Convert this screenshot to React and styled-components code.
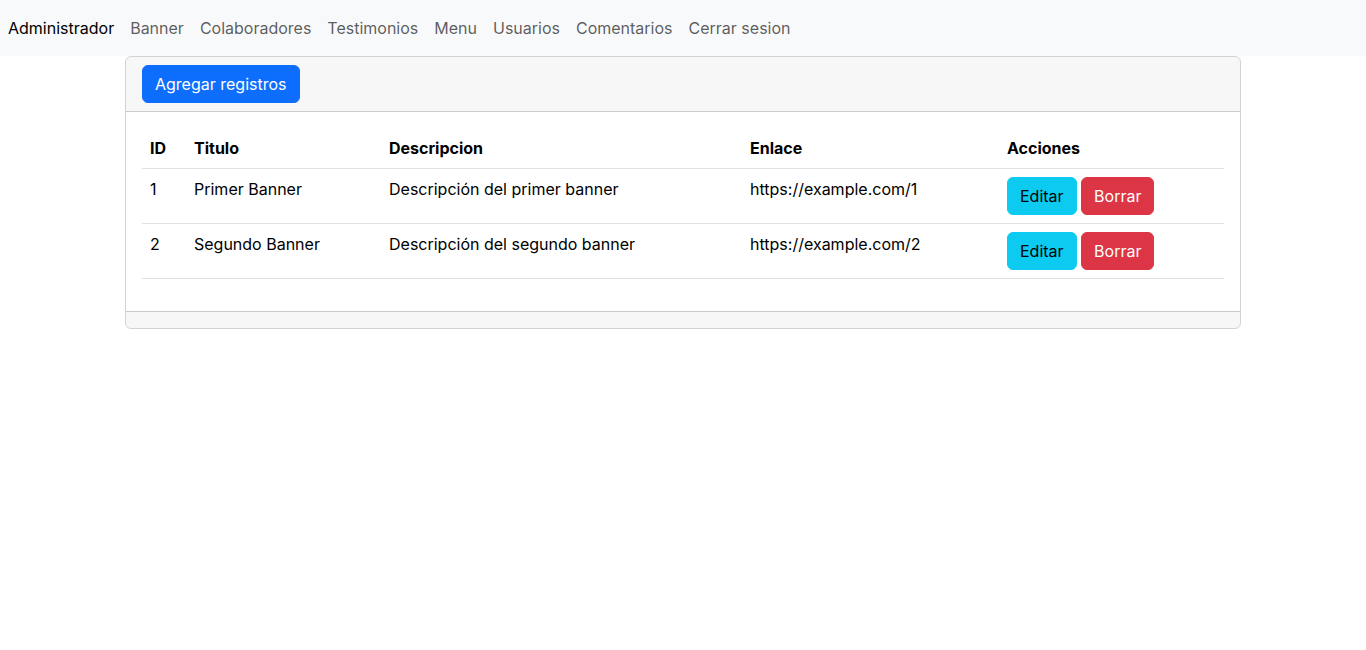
import React from 'react'
import styled, { createGlobalStyle } from 'styled-components'

const banners = [
  { id: 1, titulo: 'Primer Banner', descripcion: 'Descripción del primer banner', enlace: 'https://example.com/1' },
  { id: 2, titulo: 'Segundo Banner', descripcion: 'Descripción del segundo banner', enlace: 'https://example.com/2' }
]

const links = ['Banner', 'Colaboradores', 'Testimonios', 'Menu', 'Usuarios', 'Comentarios', 'Cerrar sesion']

export default function App() {
  return (
    <>
      <GlobalStyle />
      <Navbar>
        <NavList>
          <NavLink href="#" active>Administrador</NavLink>
          {links.map(l => (
            <NavLink key={l} href="#">{l}</NavLink>
          ))}
        </NavList>
      </Navbar>
      <Container>
        <Card>
          <CardHeader>
            <Button variant="primary">Agregar registros</Button>
          </CardHeader>
          <CardBody>
            <Table>
              <colgroup>
                <col style={{ width: 44 }} />
                <col style={{ width: 195 }} />
                <col style={{ width: 361 }} />
                <col style={{ width: 257 }} />
                <col />
              </colgroup>
              <thead>
                <tr>
                  <th>ID</th>
                  <th>Titulo</th>
                  <th>Descripcion</th>
                  <th>Enlace</th>
                  <th>Acciones</th>
                </tr>
              </thead>
              <tbody>
                {banners.map(b => (
                  <tr key={b.id}>
                    <td>{b.id}</td>
                    <td>{b.titulo}</td>
                    <td>{b.descripcion}</td>
                    <td>{b.enlace}</td>
                    <td>
                      <Button variant="info">Editar</Button>{' '}
                      <Button variant="danger">Borrar</Button>
                    </td>
                  </tr>
                ))}
              </tbody>
            </Table>
          </CardBody>
          <CardFooter />
        </Card>
      </Container>
    </>
  )
}

const GlobalStyle = createGlobalStyle`
  * { box-sizing: border-box; }
  body {
    margin: 0;
    font-family: Inter, "Liberation Sans", sans-serif;
    font-size: 16px;
    line-height: 1.5;
    color: #212529;
    background: #fff;
  }
`

const Navbar = styled.nav`
  background: #f8f9fa;
  padding: 8px 0;
`

const NavList = styled.div`
  display: flex;
  align-items: center;
`

const NavLink = styled.a`
  display: block;
  padding: 8px;
  text-decoration: none;
  color: ${p => (p.active ? '#000' : 'rgba(0, 0, 0, 0.65)')};
`

const Container = styled.div`
  max-width: 1140px;
  margin: 0 auto;
  padding: 0 12px;
`

const Card = styled.div`
  display: flex;
  flex-direction: column;
  border: 1px solid rgba(0, 0, 0, 0.175);
  border-radius: 6px;
  overflow: hidden;
`

const CardHeader = styled.div`
  padding: 8px 16px;
  background: rgba(0, 0, 0, 0.03);
  border-bottom: 1px solid rgba(0, 0, 0, 0.175);
`

const CardBody = styled.div`
  padding: 16px;
`

const CardFooter = styled.div`
  padding: 8px 16px;
  background: rgba(0, 0, 0, 0.03);
  border-top: 1px solid rgba(0, 0, 0, 0.175);
`

const Table = styled.table`
  width: 100%;
  table-layout: fixed;
  border-collapse: collapse;
  margin-bottom: 16px;
  color: #000;
  th, td {
    padding: 8px;
    text-align: left;
    vertical-align: top;
    border-bottom: 1px solid #dee2e6;
  }
  th {
    font-weight: 700;
  }
`

const colors = {
  primary: { bg: '#0d6efd', fg: '#fff' },
  info: { bg: '#0dcaf0', fg: '#000' },
  danger: { bg: '#dc3545', fg: '#fff' }
}

const Button = styled.button`
  display: inline-block;
  vertical-align: top;
  font-family: inherit;
  font-size: 16px;
  line-height: 24px;
  padding: 6px 12px;
  border: 1px solid ${p => colors[p.variant].bg};
  border-radius: 6px;
  background: ${p => colors[p.variant].bg};
  color: ${p => colors[p.variant].fg};
  cursor: pointer;
`
